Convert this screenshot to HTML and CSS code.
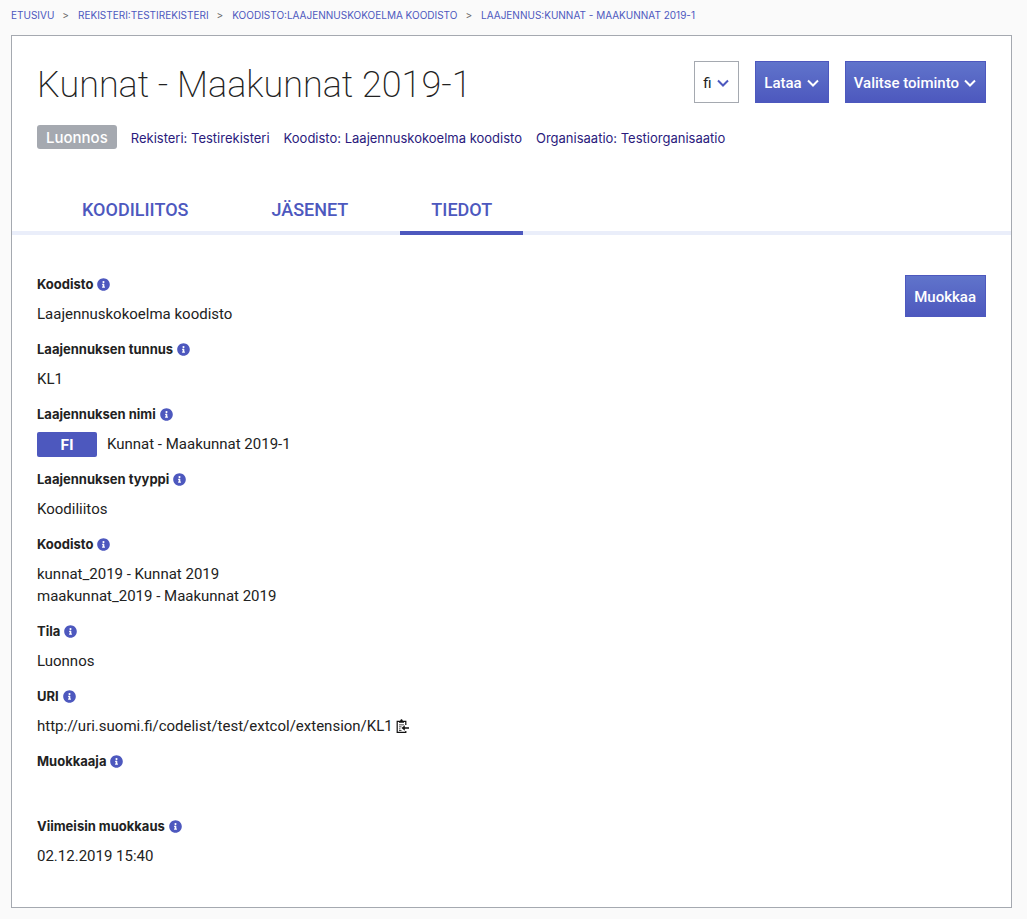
FILE: index.html
```html
<!DOCTYPE html>
<html lang="fi">
<head>
<meta charset="utf-8">
<meta name="viewport" content="width=device-width, initial-scale=1">
<title>Kunnat - Maakunnat 2019-1</title>
<link rel="stylesheet" href="styles.css">
</head>
<body>
<svg class="sprite" aria-hidden="true">
  <symbol id="info" viewBox="0 0 512 512"><path fill="currentColor" d="M256 8C119 8 8 119.100 8 256c0 137 111 248 248 248s248-111 248-248C504 119.100 393 8 256 8zm0 110a42 42 0 1 1 0 84 42 42 0 0 1 0-84zm56 254a12 12 0 0 1-12 12h-88a12 12 0 0 1-12-12v-24a12 12 0 0 1 12-12h12v-64h-12a12 12 0 0 1-12-12v-24a12 12 0 0 1 12-12h64a12 12 0 0 1 12 12v100h12a12 12 0 0 1 12 12z"/></symbol>
  <symbol id="chevron" viewBox="0 0 12 8"><path fill="none" stroke="currentColor" stroke-width="2" d="M1 1.500l5 5 5-5"/></symbol>
</svg>
<nav class="breadcrumb" aria-label="Murupolku">
  <a href="#">Etusivu</a><span class="sep">&gt;</span><a href="#">Rekisteri:Testirekisteri</a><span class="sep">&gt;</span><a href="#">Koodisto:Laajennuskokoelma koodisto</a><span class="sep">&gt;</span><a href="#">Laajennus:Kunnat - Maakunnat 2019-1</a>
</nav>
<main class="panel">
  <header class="head">
    <h1 class="title">Kunnat - Maakunnat 2019-1</h1>
    <div class="actions">
      <div class="lang">
        <select class="lang-select" aria-label="Kieli"><option>fi</option><option>sv</option><option>en</option></select>
        <svg class="chevron lang-chevron"><use href="#chevron"/></svg>
      </div>
      <button class="btn" type="button">Lataa<svg class="chevron"><use href="#chevron"/></svg></button>
      <button class="btn" type="button">Valitse toiminto<svg class="chevron"><use href="#chevron"/></svg></button>
    </div>
  </header>
  <div class="meta">
    <span class="status">Luonnos</span>
    <a href="#">Rekisteri: Testirekisteri</a>
    <a href="#">Koodisto: Laajennuskokoelma koodisto</a>
    <a href="#">Organisaatio: Testiorganisaatio</a>
  </div>
  <div class="tabs" role="tablist">
    <button class="tab" type="button" role="tab" aria-selected="false">KOODILIITOS</button>
    <button class="tab" type="button" role="tab" aria-selected="false">JÄSENET</button>
    <button class="tab tab-active" type="button" role="tab" aria-selected="true">TIEDOT</button>
  </div>
  <section class="content">
    <dl class="fields">
      <div class="field"><dt>Koodisto<svg class="info"><use href="#info"/></svg></dt><dd>Laajennuskokoelma koodisto</dd></div>
      <div class="field"><dt>Laajennuksen tunnus<svg class="info"><use href="#info"/></svg></dt><dd>KL1</dd></div>
      <div class="field"><dt>Laajennuksen nimi<svg class="info"><use href="#info"/></svg></dt><dd class="localized"><span class="lang-tag">FI</span>Kunnat - Maakunnat 2019-1</dd></div>
      <div class="field"><dt>Laajennuksen tyyppi<svg class="info"><use href="#info"/></svg></dt><dd>Koodiliitos</dd></div>
      <div class="field"><dt>Koodisto<svg class="info"><use href="#info"/></svg></dt><dd>kunnat_2019 - Kunnat 2019</dd><dd>maakunnat_2019 - Maakunnat 2019</dd></div>
      <div class="field"><dt>Tila<svg class="info"><use href="#info"/></svg></dt><dd>Luonnos</dd></div>
      <div class="field"><dt>URI<svg class="info"><use href="#info"/></svg></dt><dd class="uri">http://uri.suomi.fi/codelist/test/extcol/extension/KL1<button class="copy" type="button" aria-label="Kopioi"><svg class="copy-icon" viewBox="0 0 13 14"><path fill="none" stroke="currentColor" stroke-width="1.200" d="M9.800 6V2.300H1.200v11h8.600V12"/><path fill="currentColor" d="M3 3.800V2h1.200C4.300.8 4.800.3 5.500.3S6.700.8 6.800 2H8v1.800zM3 5.400h5v.8H3zM3 7.400h2.500v.8H3zM3 9.400h1.500v.8H3zM3 11.200h2.500v.8H3zM5.500 9l3.300-2.800v2H13v1.600H8.800v2z"/></svg></button></dd></div>
      <div class="field"><dt>Muokkaaja<svg class="info"><use href="#info"/></svg></dt><dd></dd></div>
      <div class="field"><dt>Viimeisin muokkaus<svg class="info"><use href="#info"/></svg></dt><dd>02.12.2019 15:40</dd></div>
    </dl>
    <button class="btn" type="button">Muokkaa</button>
  </section>
</main>
</body>
</html>
```
FILE: styles.css
```css
* { box-sizing: border-box; }
body {
  margin: 0;
  padding: 0 15px 11px 11px;
  background: #fafafa;
  color: #222;
  font: 15px/22px Roboto, Inter, "Liberation Sans", sans-serif;
}
.sprite { position: absolute; width: 0; height: 0; }
a { color: #4d58be; text-decoration: none; }
button, select { font: inherit; cursor: pointer; }
.breadcrumb, .meta, dt, .lang-tag { font-family: Inter, "Liberation Sans", sans-serif; }
.breadcrumb {
  padding: 7px 0 12px;
  font-size: 10px;
  line-height: 16px;
  text-transform: uppercase;
}
.sep { margin: 0 9px 0 8px; color: #666; }
.panel { border: 1px solid #a5a9b0; background: #fff; }
.head {
  display: flex;
  justify-content: space-between;
  align-items: flex-start;
  gap: 16px;
  padding: 25px 25px 0;
}
.title {
  margin: 0;
  font-size: 36px;
  line-height: 48px;
  font-weight: 200;
}
.actions { display: flex; gap: 16px; }
.btn {
  display: flex;
  align-items: center;
  gap: 5px;
  height: 42px;
  padding: 1px 9px 0 8px;
  border: 1px solid #4d58be;
  background: linear-gradient(#6074cb, #4d58be);
  color: #fff;
  font-weight: 500;
  white-space: nowrap;
}
.chevron { width: 12px; height: 8px; }
.lang { position: relative; color: #4d58be; }
.lang-select {
  appearance: none;
  width: 45px;
  height: 42px;
  padding: 1px 8px 0;
  border: 1px solid #a5a9b0;
  border-radius: 0;
  background: #fff;
  color: #222;
}
.lang-chevron { position: absolute; right: 10px; top: 18px; pointer-events: none; }
.meta {
  display: flex;
  align-items: center;
  flex-wrap: wrap;
  gap: 14px;
  padding: 15px 25px 0;
  font-size: 13px;
}
.meta a { color: #2a1a7d; line-height: 24px; padding-top: 2px; }
.status {
  padding: 2px 9px 0;
  border-radius: 3px;
  background: #a5a9b0;
  color: #fff;
  font-size: 15px;
  font-weight: 500;
}
.tabs {
  display: flex;
  gap: 21px;
  margin-top: 35px;
  padding-left: 39px;
  box-shadow: inset 0 -4px #eaeefa;
}
.tab {
  height: 50px;
  padding: 3px 31px 0;
  border: 0;
  border-bottom: 4px solid transparent;
  background: none;
  color: #4d58be;
  font-size: 18px;
  font-weight: 500;
}
.tab-active { border-bottom-color: #4d58be; }
.content {
  display: flex;
  justify-content: space-between;
  align-items: flex-start;
  padding: 40px 25px 27px;
}
.fields { margin: -2px 0 0; }
.field { padding-bottom: 13px; }
dt {
  display: flex;
  align-items: center;
  gap: 4px;
  margin-bottom: 8px;
  font-size: 13px;
  font-weight: 700;
}
dd { margin: 0; min-height: 22px; }
.info { width: 13px; height: 13px; color: #4d58be; }
.localized { display: flex; gap: 10px; height: 22px; }
.lang-tag {
  width: 60px;
  height: 25px;
  margin-top: -1px;
  border-radius: 2px;
  background: #4d58be;
  color: #fff;
  font-weight: 700;
  line-height: 25px;
  text-align: center;
}
.uri { display: flex; align-items: center; gap: 3px; }
.copy { display: flex; padding: 0; border: 0; background: none; color: #111; }
.copy-icon { width: 13px; height: 14px; }
```
